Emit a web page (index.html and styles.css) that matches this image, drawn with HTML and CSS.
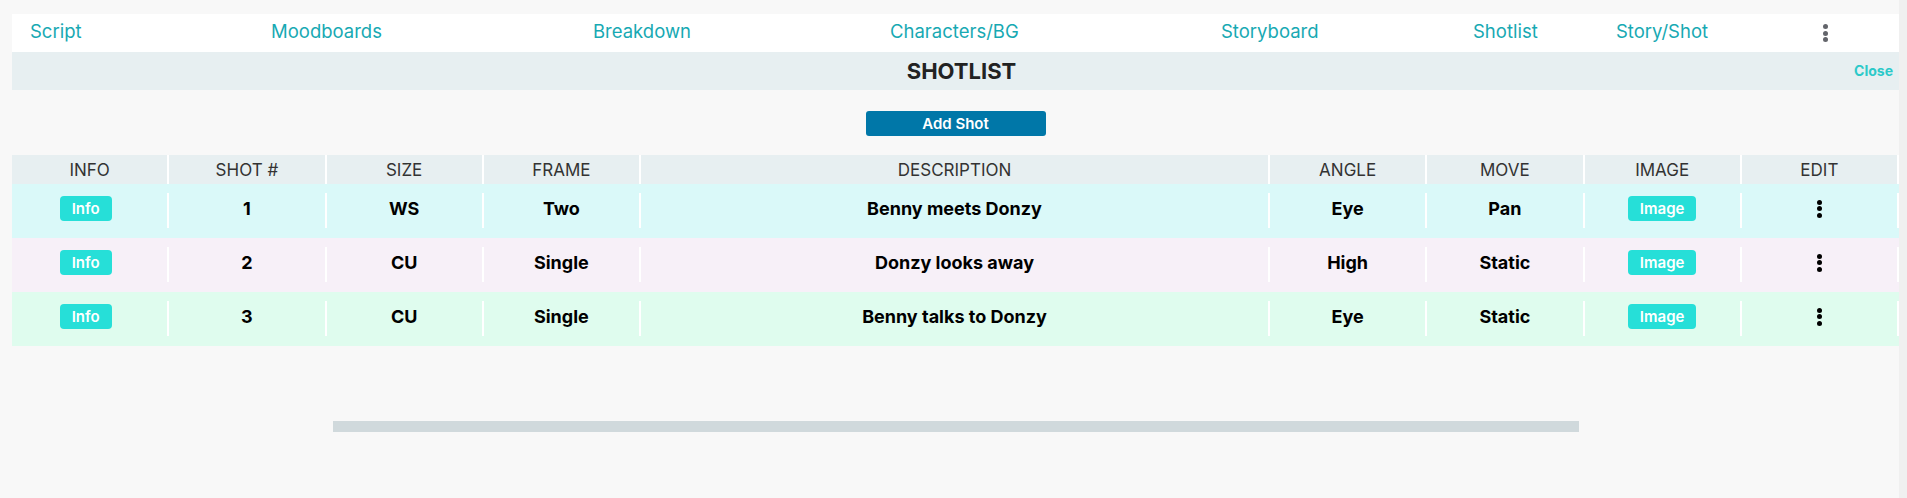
FILE: index.html
```html
<!DOCTYPE html>
<html lang="en">
<head>
<meta charset="utf-8">
<title>Shotlist</title>
<link rel="stylesheet" href="styles.css">
</head>
<body>
<div class="page">
  <main class="main">
    <nav class="nav">
      <a class="nav-link">Script</a>
      <a class="nav-link">Moodboards</a>
      <a class="nav-link">Breakdown</a>
      <a class="nav-link">Characters/BG</a>
      <a class="nav-link">Storyboard</a>
      <a class="nav-link">Shotlist</a>
      <a class="nav-link">Story/Shot</a>
      <span class="kebab kebab-gray"><i></i><i></i><i></i></span>
    </nav>
    <div class="band">
      <h1 class="title">SHOTLIST</h1>
      <a class="close">Close</a>
    </div>
    <div class="actions">
      <button class="add-btn">Add Shot</button>
    </div>
    <div class="table">
      <div class="thead">
        <div class="th">INFO</div>
        <div class="th">SHOT #</div>
        <div class="th">SIZE</div>
        <div class="th">FRAME</div>
        <div class="th">DESCRIPTION</div>
        <div class="th">ANGLE</div>
        <div class="th">MOVE</div>
        <div class="th">IMAGE</div>
        <div class="th">EDIT</div>
      </div>
      <div class="tr row-cyan">
        <div class="td"><button class="pill pill-info">Info</button></div>
        <div class="td">1</div>
        <div class="td">WS</div>
        <div class="td">Two</div>
        <div class="td">Benny meets Donzy</div>
        <div class="td">Eye</div>
        <div class="td">Pan</div>
        <div class="td"><button class="pill pill-image">Image</button></div>
        <div class="td"><span class="kebab kebab-black"><i></i><i></i><i></i></span></div>
      </div>
      <div class="tr row-lavender">
        <div class="td"><button class="pill pill-info">Info</button></div>
        <div class="td">2</div>
        <div class="td">CU</div>
        <div class="td">Single</div>
        <div class="td">Donzy looks away</div>
        <div class="td">High</div>
        <div class="td">Static</div>
        <div class="td"><button class="pill pill-image">Image</button></div>
        <div class="td"><span class="kebab kebab-black"><i></i><i></i><i></i></span></div>
      </div>
      <div class="tr row-mint">
        <div class="td"><button class="pill pill-info">Info</button></div>
        <div class="td">3</div>
        <div class="td">CU</div>
        <div class="td">Single</div>
        <div class="td">Benny talks to Donzy</div>
        <div class="td">Eye</div>
        <div class="td">Static</div>
        <div class="td"><button class="pill pill-image">Image</button></div>
        <div class="td"><span class="kebab kebab-black"><i></i><i></i><i></i></span></div>
      </div>
    </div>
    <div class="hscroll"><div class="hscroll-thumb"></div></div>
  </main>
  <div class="vtrack"></div>
</div>
</body>
</html>
```
FILE: styles.css
```css
* { box-sizing: border-box; }

html, body {
  margin: 0;
  padding: 0;
  height: 100%;
}

body {
  background: #f8f8f8;
  font-family: Inter, "Open Sans", Arial, sans-serif;
  color: #000;
}

.page {
  display: flex;
  min-height: 498px;
}

.main {
  flex: 1;
  padding: 14px 0 0 12px;
  min-width: 0;
}

.vtrack {
  width: 8px;
  flex: none;
  background: #f0f0f0;
}

/* nav */
.nav {
  height: 38px;
  background: #fff;
  display: grid;
  grid-template-columns: 241px 322px 297px 331px 252px 143px 205px auto;
  align-items: start;
  padding: 5px 0 0 18px;
}

.nav-link {
  font-size: 18.5px;
  line-height: 24px;
  color: #17a9b3;
  text-decoration: none;
  white-space: nowrap;
}

.kebab {
  display: inline-flex;
  flex-direction: column;
  gap: 1.5px;
}

.kebab i {
  display: block;
  width: 5px;
  height: 5px;
  border-radius: 50%;
}

.kebab-gray {
  margin-top: 5px;
  margin-left: 2px;
}

.kebab-gray i { background: #63656b; }
.kebab-black i { background: #000; }

/* band */
.band {
  height: 38px;
  background: #e7eff1;
  display: flex;
  align-items: center;
  justify-content: center;
  position: relative;
  padding-left: 12px;
}

.title {
  margin: 0;
  font-size: 22px;
  font-weight: 700;
  color: #222;
}

.close {
  position: absolute;
  right: 6px;
  top: 10px;
  font-size: 14px;
  font-weight: 700;
  color: #2cc9c9;
}

/* actions */
.actions {
  display: flex;
  justify-content: center;
  padding: 21px 0 19px;
}

.add-btn {
  width: 180px;
  height: 25px;
  border: none;
  border-radius: 3px;
  background: #0077a8;
  color: #fff;
  font-family: inherit;
  font-size: 15px;
  font-weight: 600;
  padding: 0;
}

/* table */
.thead, .tr {
  display: grid;
  grid-template-columns: repeat(4, 1fr) 4fr repeat(4, 1fr);
}

.thead {
  height: 29px;
  background: #e7eff1;
}

.th {
  border-right: 2px solid #fff;
  display: flex;
  align-items: center;
  justify-content: center;
  font-size: 17px;
  color: #333;
}

.tr {
  height: 54px;
  padding: 9px 0 10px;
}

.row-cyan { background: #daf9f9; }
.row-lavender { background: #f7f0f8; }
.row-mint { background: #dffcee; }

.td {
  border-right: 2px solid #fff;
  display: flex;
  align-items: center;
  justify-content: center;
  padding-bottom: 4px;
  font-size: 18px;
  font-weight: 700;
}

.pill {
  height: 25px;
  border: none;
  border-radius: 4px;
  background: #26dfd8;
  color: #fff;
  font-family: inherit;
  font-size: 15px;
  font-weight: 600;
  padding: 0;
}

.pill-info {
  width: 52px;
  margin-right: 8px;
}

.pill-image {
  width: 68px;
}

/* horizontal scroll bar */
.hscroll {
  margin-top: 75px;
  padding-left: 321px;
}

.hscroll-thumb {
  width: 1246px;
  height: 11px;
  background: #d0d9dc;
}
```
